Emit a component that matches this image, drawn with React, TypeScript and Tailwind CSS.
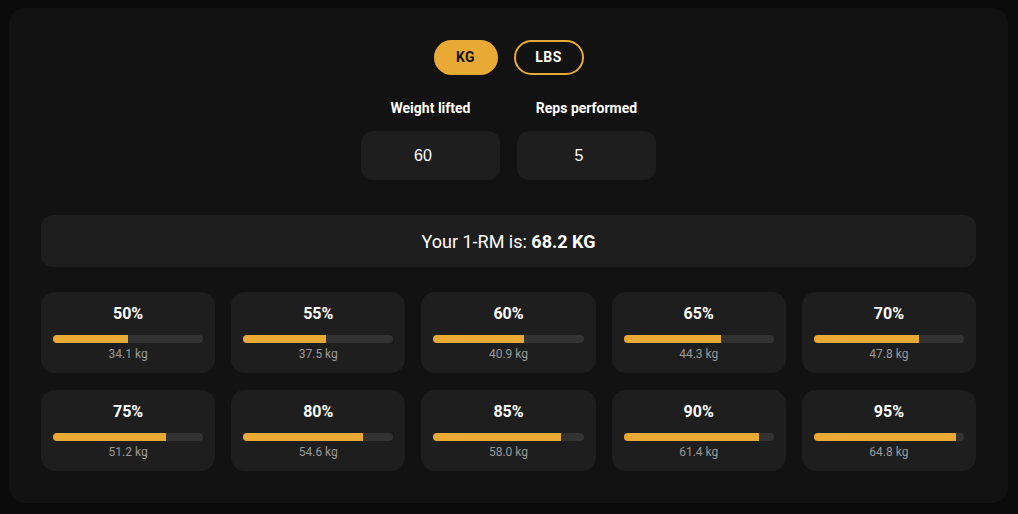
import React from "react";

const items: { pct: number; kg: string }[] = [
  { pct: 50, kg: "34.1" },
  { pct: 55, kg: "37.5" },
  { pct: 60, kg: "40.9" },
  { pct: 65, kg: "44.3" },
  { pct: 70, kg: "47.8" },
  { pct: 75, kg: "51.2" },
  { pct: 80, kg: "54.6" },
  { pct: 85, kg: "58.0" },
  { pct: 90, kg: "61.4" },
  { pct: 95, kg: "64.8" },
];

function PctCard({ pct, kg }: { pct: number; kg: string }) {
  return (
    <div className="h-[81px] rounded-[14px] bg-[#1e1e1e] px-3 pt-[12px] flex flex-col items-center">
      <div className="text-[16px] leading-5 font-bold text-white">{pct}%</div>
      <div className="mt-[11px] h-2 w-full rounded-full bg-[#333333] overflow-hidden">
        <div className="h-full bg-[#e9a935]" style={{ width: `${pct}%` }} />
      </div>
      <div className="mt-[3px] text-[12px] leading-4 text-[#9a9a9a]">{kg} kg</div>
    </div>
  );
}

export default function App() {
  return (
    <div
      className="min-h-screen w-full bg-[#0b0b0b] pt-[8px] pl-[9px]"
      style={{ fontFamily: "Roboto, 'Liberation Sans', sans-serif" }}
    >
      <div className="w-[999px] h-[495px] rounded-[16px] bg-[#121212] px-8 pt-8">
        <div className="flex justify-center gap-4">
          <button className="h-[35px] w-[64px] rounded-full bg-[#e9a935] text-[#141414] text-[14px] font-bold tracking-[0.5px]">
            KG
          </button>
          <button className="h-[35px] w-[70px] rounded-full border-2 border-[#e9a935] text-white text-[14px] font-bold tracking-[0.5px]">
            LBS
          </button>
        </div>
        <div className="mt-[23px] flex justify-center gap-[17px]">
          <div className="flex flex-col items-center w-[139px]">
            <div className="h-5 leading-5 text-[14px] font-bold text-white">Weight lifted</div>
            <div
              className="mt-[13px] h-[49px] w-full rounded-[12px] bg-[#1e1e1e] flex items-center justify-center pr-[15px] text-[16px] text-white"
              style={{ fontFamily: "'Liberation Sans', Arial, sans-serif" }}
            >
              60
            </div>
          </div>
          <div className="flex flex-col items-center w-[139px]">
            <div className="h-5 leading-5 text-[14px] font-bold text-white">Reps performed</div>
            <div
              className="mt-[13px] h-[49px] w-full rounded-[12px] bg-[#1e1e1e] flex items-center justify-center pr-[15px] text-[16px] text-white"
              style={{ fontFamily: "'Liberation Sans', Arial, sans-serif" }}
            >
              5
            </div>
          </div>
        </div>
        <div className="mt-[35px] h-[52px] rounded-[12px] bg-[#1e1e1e] flex items-center justify-center text-[18px] text-white">
          Your 1-RM is:&nbsp;<span className="font-bold">68.2 KG</span>
        </div>
        <div className="mt-[25px] grid grid-cols-5 gap-x-4 gap-y-[17px]">
          {items.map((it) => (
            <PctCard key={it.pct} pct={it.pct} kg={it.kg} />
          ))}
        </div>
      </div>
    </div>
  );
}
